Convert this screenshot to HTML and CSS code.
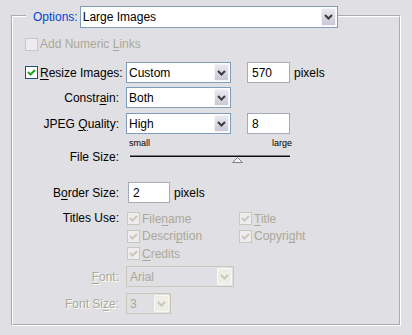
FILE: index.html
```html
<!DOCTYPE html>
<html lang="en">
<head>
    <meta charset="UTF-8">
    <meta name="viewport" content="width=device-width, initial-scale=1.0">
    <title>Gallery Options</title>
    <link rel="stylesheet" href="styles.css">
</head>
<body>

<fieldset class="options-box">
    <legend class="options-legend">
        <span class="legend-label">Options:</span>
        <div class="dropdown dropdown-wide">
            <span class="dropdown-value">Large Images</span>
            <span class="dropdown-btn"><svg width="9" height="6" viewBox="0 0 9 6"><path d="M1 1 L4.5 4.5 L8 1" /></svg></span>
        </div>
    </legend>

    <!-- Numeric links -->
    <div class="row row-numeric">
        <label class="check disabled"><span class="box"></span><span>Add Numeric <u>L</u>inks</span></label>
    </div>

    <!-- Resize -->
    <div class="row row-resize">
        <label class="check"><span class="box"><svg width="11" height="11" viewBox="0 0 11 11"><path d="M2 5 L4.5 7.5 L9 3" /></svg></span><span><u>R</u>esize Images:</span></label>
        <div class="controls">
            <div class="dropdown dropdown-mid">
                <span class="dropdown-value">Custom</span>
                <span class="dropdown-btn"><svg width="9" height="6" viewBox="0 0 9 6"><path d="M1 1 L4.5 4.5 L8 1" /></svg></span>
            </div>
            <input type="text" class="textbox textbox-side" value="570">
            <span class="unit">pixels</span>
        </div>
    </div>

    <div class="row row-constrain">
        <span class="label">Constr<u>a</u>in:</span>
        <div class="controls">
            <div class="dropdown dropdown-mid">
                <span class="dropdown-value">Both</span>
                <span class="dropdown-btn"><svg width="9" height="6" viewBox="0 0 9 6"><path d="M1 1 L4.5 4.5 L8 1" /></svg></span>
            </div>
        </div>
    </div>

    <div class="row row-jpeg">
        <span class="label">JPEG <u>Q</u>uality:</span>
        <div class="controls">
            <div class="dropdown dropdown-mid">
                <span class="dropdown-value">High</span>
                <span class="dropdown-btn"><svg width="9" height="6" viewBox="0 0 9 6"><path d="M1 1 L4.5 4.5 L8 1" /></svg></span>
            </div>
            <input type="text" class="textbox textbox-side" value="8">
        </div>
    </div>

    <!-- File size slider -->
    <div class="row row-slider">
        <span class="label label-bottom">File Size:</span>
        <div class="slider">
            <div class="slider-ends"><span>small</span><span>large</span></div>
            <div class="slider-track">
                <svg class="slider-thumb" width="11" height="6" viewBox="0 0 11 6"><polygon points="5.5,0.5 10.5,5.5 0.5,5.5" /></svg>
            </div>
        </div>
    </div>

    <div class="row row-border">
        <span class="label">B<u>o</u>rder Size:</span>
        <div class="controls">
            <input type="text" class="textbox textbox-border" value="2">
            <span class="unit">pixels</span>
        </div>
    </div>

    <!-- Titles -->
    <div class="row row-titles">
        <span class="label label-top">Titles Use:</span>
        <div class="titles-grid">
            <label class="check disabled"><span class="box"><svg width="11" height="11" viewBox="0 0 11 11"><path d="M2 5 L4.5 7.5 L9 3" /></svg></span><span>File<u>n</u>ame</span></label>
            <label class="check disabled"><span class="box"><svg width="11" height="11" viewBox="0 0 11 11"><path d="M2 5 L4.5 7.5 L9 3" /></svg></span><span><u>T</u>itle</span></label>
            <label class="check disabled"><span class="box"><svg width="11" height="11" viewBox="0 0 11 11"><path d="M2 5 L4.5 7.5 L9 3" /></svg></span><span>Descri<u>p</u>tion</span></label>
            <label class="check disabled"><span class="box"><svg width="11" height="11" viewBox="0 0 11 11"><path d="M2 5 L4.5 7.5 L9 3" /></svg></span><span>Copyri<u>g</u>ht</span></label>
            <label class="check disabled"><span class="box"><svg width="11" height="11" viewBox="0 0 11 11"><path d="M2 5 L4.5 7.5 L9 3" /></svg></span><span><u>C</u>redits</span></label>
        </div>
    </div>

    <div class="row row-font">
        <span class="label label-off"><u>F</u>ont:</span>
        <div class="controls">
            <div class="dropdown dropdown-font off">
                <span class="dropdown-value">Arial</span>
                <span class="dropdown-btn"><svg width="9" height="6" viewBox="0 0 9 6"><path d="M1 1 L4.5 4.5 L8 1" /></svg></span>
            </div>
        </div>
    </div>

    <div class="row row-fontsize">
        <span class="label label-off">Font Si<u>z</u>e:</span>
        <div class="controls">
            <div class="dropdown dropdown-size off">
                <span class="dropdown-value">3</span>
                <span class="dropdown-btn"><svg width="9" height="6" viewBox="0 0 9 6"><path d="M1 1 L4.5 4.5 L8 1" /></svg></span>
            </div>
        </div>
    </div>
</fieldset>

</body>
</html>
```

FILE: styles.css
```css
body {
    margin: 0;
    padding: 4px 11px 0 11px;
    background: #e0dfe3;
    font-family: "Liberation Sans", Arial, sans-serif;
    font-size: 12px;
    color: #000;
}
.options-box {
    width: 390px;
    box-sizing: border-box;
    margin: 0;
    min-width: 0;
    padding: 8px 12px 10px 12px;
    border: 2px groove #fff;
}
.options-legend {
    display: flex;
    align-items: center;
    margin-left: 1px;
    padding: 2px 0 0 7px;
}
.legend-label {
    color: #0046d5;
}
u {
    text-decoration-thickness: 1px;
    text-underline-offset: 2px;
}

/* rows */
.row {
    display: grid;
    grid-template-columns: 94px 1fr;
    column-gap: 7px;
    align-items: center;
    height: 21px;
}
.row-numeric { height: 16px; }
.row-resize { margin-top: 10px; }
.row-constrain { margin-top: 4px; }
.row-jpeg { margin-top: 5px; }
.row-slider { margin-top: 4px; height: 26px; }
.row-border { margin-top: 18px; }
.row-titles { margin-top: 7px; height: 52px; align-items: start; }
.row-font { margin-top: 4px; }
.row-fontsize { margin-top: 6px; }

.label {
    text-align: right;
    white-space: nowrap;
}
.label-bottom {
    align-self: end;
    line-height: 14px;
}
.label-top {
    line-height: 17px;
}
.label-off {
    color: #aca899;
    text-shadow: 1px 1px 0 #fff;
}
.controls {
    display: flex;
    align-items: center;
}
.unit {
    margin-left: 4px;
}

/* checkboxes */
.check {
    display: flex;
    align-items: center;
    white-space: nowrap;
}
.box {
    flex-shrink: 0;
    width: 13px;
    height: 13px;
    box-sizing: border-box;
    margin-right: 2px;
    border: 1px solid #1c5180;
    background: #fff;
    display: flex;
    align-items: center;
    justify-content: center;
}
.box path {
    fill: none;
    stroke: #21a121;
    stroke-width: 2;
}
.check.disabled {
    color: #aca899;
}
.check.disabled .box {
    border-color: #cac8bb;
    background: #ededf0;
}
.check.disabled .box path {
    stroke: #cac8bb;
}

/* dropdowns */
.dropdown {
    display: flex;
    height: 21px;
    box-sizing: border-box;
    border: 1px solid #7f9db9;
    background: #fff;
}
.dropdown-wide {
    width: 258px;
    height: 22px;
    margin-left: 2px;
}
.dropdown-mid { width: 105px; }
.dropdown-font { width: 108px; }
.dropdown-size { width: 45px; }
.dropdown-value {
    flex: 1;
    padding-left: 2px;
    display: flex;
    align-items: center;
}
.dropdown-btn {
    width: 15px;
    margin: 1px;
    box-sizing: border-box;
    border: 1px solid #f4f4f8;
    border-radius: 1px;
    background: linear-gradient(#e9e9f0, #c9c9d7);
    display: flex;
    align-items: center;
    justify-content: center;
}
.dropdown-btn path {
    fill: none;
    stroke: #3c3c3c;
    stroke-width: 2;
}
.dropdown.off {
    border-color: #c9c7ba;
    background: #e0dfe3;
    color: #aca899;
}
.dropdown.off .dropdown-value {
    padding-left: 3px;
}
.dropdown.off .dropdown-btn {
    border-color: #f8f8f4;
    background: #eeede6;
}
.dropdown.off .dropdown-btn path {
    stroke: #cac8bb;
}

/* text boxes */
.textbox {
    height: 21px;
    box-sizing: border-box;
    border: 1px solid #a5acb5;
    padding: 0 4px;
    font-family: "Liberation Sans", Arial, sans-serif;
    font-size: 12px;
    color: #000;
    background: #fff;
    outline: none;
}
.textbox-side {
    width: 43px;
    margin-left: 16px;
}
.textbox-border {
    width: 42px;
    margin-left: 2px;
}

/* slider */
.slider {
    margin-left: 3px;
    width: 163px;
    align-self: stretch;
}
.slider-ends {
    display: flex;
    justify-content: space-between;
    font-size: 9px;
    line-height: 11px;
}
.slider-track {
    position: relative;
    margin: 6px 2px 0 1px;
    height: 0;
    border-top: 1px solid #7b7b7b;
    border-bottom: 1px solid #111;
}
.slider-thumb {
    position: absolute;
    left: 102px;
    top: 1px;
}
.slider-thumb polygon {
    fill: #f4f4f4;
    stroke: #808080;
}

/* titles */
.titles-grid {
    display: grid;
    grid-template-columns: 112px auto;
    grid-template-rows: 17px 18px 17px;
    padding-left: 1px;
    align-items: center;
}
```
